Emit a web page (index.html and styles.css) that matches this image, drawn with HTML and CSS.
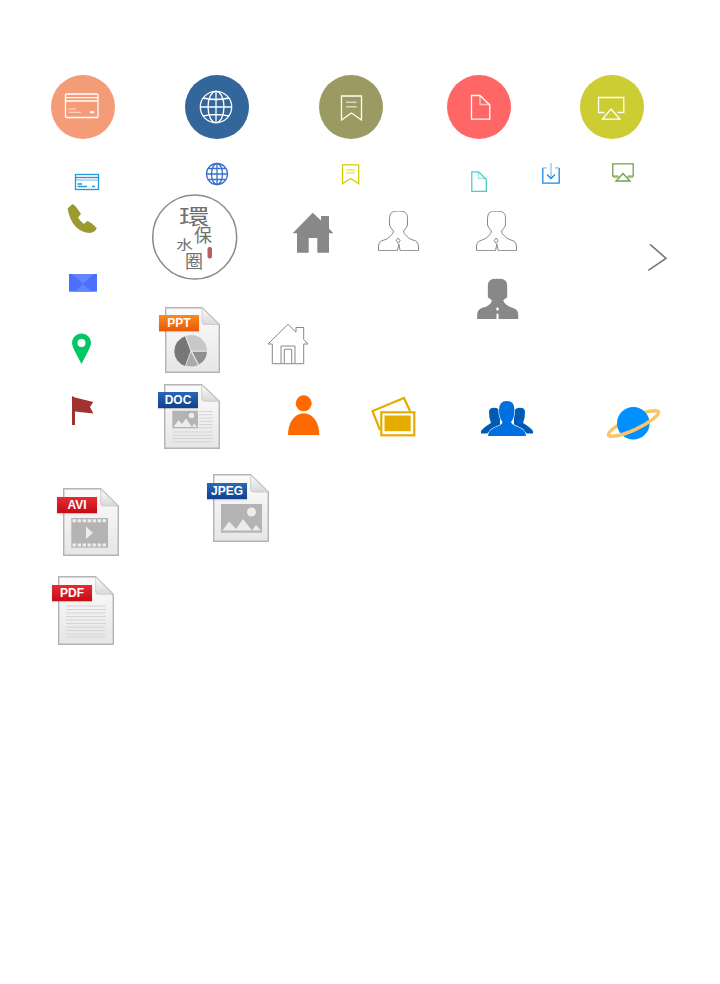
FILE: index.html
```html
<!DOCTYPE html>
<html lang="zh">
<head>
<meta charset="utf-8">
<title>Icons</title>
<link rel="stylesheet" href="styles.css">
</head>
<body>
<svg class="defs" width="0" height="0" aria-hidden="true">
  <defs>
    <linearGradient id="paper" x1="0" y1="0" x2="0" y2="1"><stop offset="0" stop-color="#fcfcfc"/><stop offset="1" stop-color="#e6e6e6"/></linearGradient>
    <linearGradient id="foldshade" x1="0" y1="0" x2="0" y2="1"><stop offset="0" stop-color="#fafafa"/><stop offset="1" stop-color="#d8d8d8"/></linearGradient>
    <symbol id="sheet" viewBox="0 0 55 66" preserveAspectRatio="none">
      <path class="paper" d="M.7.7H37L54.3 17.5V65.300H.7Z"/>
      <path class="fold" d="M37 1V15Q37 17.500 39.500 17.500H54Z"/>
    </symbol>
    <symbol id="bust" viewBox="0 0 122 120">
      <path d="M46 1Q60-1 74 1Q88 5 88 20V42Q86 50 76 60Q77 68 84 74Q92 84 104 87Q120 90 121 105V119H66L62 99 58 119H1V105Q2 90 18 87Q30 84 38 74Q45 68 46 60Q36 50 34 42V20Q34 5 46 1Z"/>
      <path d="M60 81L66 89 60 97 54 89Z"/>
    </symbol>
  </defs>
</svg>

<main class="canvas">
  <!-- large round badges -->
  <svg class="ic a1" viewBox="51 75 64 64">
    <circle class="f-peach" cx="83" cy="107" r="32"/>
    <g class="wline">
      <rect x="65.500" y="94" width="32.500" height="23.500" rx="1"/>
      <path d="M65.500 97.700H98M65.500 101H98"/>
      <path class="thin" d="M68.700 109H76M68.700 112.300H81"/>
      <path class="thick" d="M90 112.200H94.300"/>
    </g>
  </svg>
  <svg class="ic a2" viewBox="185 75 64 64">
    <circle class="f-navy" cx="217" cy="107" r="32"/>
    <g class="wline">
      <circle cx="216" cy="107" r="15.700"/>
      <ellipse cx="216" cy="107" rx="8" ry="15.700"/>
      <path d="M216 91.300V122.700M200.300 107H231.700M203 98Q216 101 229 98M203 116Q216 113 229 116"/>
    </g>
  </svg>
  <svg class="ic a3" viewBox="319 75 64 64">
    <circle class="f-olive" cx="351" cy="107" r="32"/>
    <g class="wline">
      <path d="M341.500 96H361.500V120L351.500 113 341.500 120Z"/>
      <path class="dim" d="M346 102.300H356.700M346 106.700H356.700"/>
    </g>
  </svg>
  <svg class="ic a4" viewBox="447 75 64 64">
    <circle class="f-coral" cx="479" cy="107" r="32"/>
    <g class="wline">
      <path d="M471.500 95.500H480L489.800 105V119.200H471.500Z"/>
      <path class="dim" d="M480 95.500V104.500H489.800"/>
    </g>
  </svg>
  <svg class="ic a5" viewBox="580 75 64 64">
    <circle class="f-lime" cx="612" cy="107" r="32"/>
    <g class="wline">
      <path d="M604.500 112.500H598.500V97.500H623.800V112.500H617.500"/>
      <path d="M611 109L620 119.200H602.500Z"/>
    </g>
  </svg>

  <!-- small line icons -->
  <svg class="ic b1" viewBox="74 173 26 18">
    <g class="line s-sky">
      <rect x="75.500" y="174.500" width="23" height="15"/>
      <path d="M75.500 177.500H98.500"/>
      <path class="soft" d="M75.500 180H98.500"/>
      <path d="M77.500 184H82M77.500 186.500H87M92 186.500H95"/>
    </g>
  </svg>
  <svg class="ic b2" viewBox="205 162 24 24">
    <g class="line s-indigo">
      <circle cx="217" cy="174" r="10.500"/>
      <ellipse cx="217" cy="174" rx="5.500" ry="10.500"/>
      <path d="M217 163.500V184.500M206.500 174H227.500M208.500 168.500H225.500M208.500 179.500H225.500"/>
    </g>
  </svg>
  <svg class="ic b3" viewBox="341 163 20 23">
    <g class="line s-yellow">
      <path d="M342.500 164.800H358.700V183.800L350.600 178.500 342.500 183.800Z"/>
      <path class="soft" d="M346 170H355M346 173H355"/>
    </g>
  </svg>
  <svg class="ic b4" viewBox="470 170 18 23">
    <g class="line s-cyan">
      <path d="M471.800 171.800H478.500L486.300 179.500V191.300H471.800Z"/>
      <path class="soft" d="M478.500 171.800V178.500H486.300"/>
    </g>
  </svg>
  <svg class="ic b5" viewBox="541 162 20 23">
    <path class="line s-azure" d="M542.800 168V183.200H559.200V168"/>
    <path class="line s-azure soft" d="M551 163V178M547 167.800H542.800M555 167.800H559.200"/>
    <path class="line s-azure" d="M547 174.500L551 178.500 555 174.500"/>
  </svg>
  <svg class="ic b6" viewBox="611 162 24 21">
    <g class="line s-moss">
      <path d="M618.500 176.200H612.800V163.800H633.200V176.200H627.500"/>
      <path class="soft" d="M613 177.500H620M626 177.500H633"/>
      <path d="M623 173.500L630 181H616Z"/>
    </g>
  </svg>

  <!-- contact glyphs -->
  <svg class="ic c1" viewBox="66 203 32 31">
    <path class="f-mustard" d="M67.500 208.500L72.500 204Q74.500 204 81 214L78 217.500Q80 221 84 224L87 221Q91 222 96.700 228Q96 231.500 90 233Q72 232 67.500 208.500Z"/>
  </svg>
  <svg class="ic c2" viewBox="68 273 30 20">
    <rect class="f-mail" x="69" y="274" width="28" height="17.700"/>
    <path class="f-mail-lt" d="M72 274H94L83 283.500Z"/>
    <path class="f-mail-lt" d="M74 291.700L83 284.500 92 291.700Z"/>
  </svg>
  <svg class="ic c3" viewBox="71 333 21 32">
    <path class="f-green" fill-rule="evenodd" d="M81.500 333.500C86.500 333.500 91 337.500 91 343C91 347 86 355 81.500 364C77 355 72 347 72 343C72 337.500 76.500 333.500 81.500 333.500ZM81.500 339A4 4 0 1 0 81.500 347A4 4 0 1 0 81.500 339Z"/>
  </svg>
  <svg class="ic c4" viewBox="71 395 24 31">
    <path class="f-flag" d="M72 396L75 397.500 93.300 402 90 407 93.300 413.500 75 411.500V425H72Z"/>
  </svg>

  <!-- seal -->
  <svg class="ic d1" viewBox="150 193 90 88">
    <circle class="seal-ring" cx="194.700" cy="237" r="42"/>
    <text class="seal-ch" transform="translate(179 223.500) scale(1.450 1)" font-size="21">環</text>
    <text class="seal-ch" x="194" y="241.800" font-size="18">保</text>
    <text class="seal-ch" transform="translate(176 249.400) scale(1.300 1)" font-size="13">水</text>
    <text class="seal-ch" x="185" y="267.800" font-size="18">圈</text>
    <rect class="f-stamp" x="207.500" y="247" width="4.500" height="11.500" rx="2"/>
  </svg>

  <!-- house and person glyphs -->
  <svg class="ic e1" viewBox="292 212 42 42">
    <path class="f-grey" fill-rule="evenodd" d="M312.700 212.700L321 220.500V216H329V228.500L333.300 233.300H329V252.800H297V233.300H292.700ZM308.700 238V252.800H317.300V238Z"/>
  </svg>
  <svg class="ic e2"><use href="#bust" class="bust-line"/></svg>
  <svg class="ic e3"><use href="#bust" class="bust-line"/></svg>
  <svg class="ic e4" viewBox="0 0 122 120">
    <path class="f-grey" d="M46 0Q60-2 76 0Q90 5 90 20V55Q84 60 78 64Q80 72 88 77Q96 84 106 86Q122 90 123 105V120H0V105Q2 90 16 86Q28 84 36 77Q44 72 44 64Q38 60 32 55V20Q32 5 46 0Z"/>
    <path class="f-white" d="M61 84L66 90 61 96 56 90ZM58 104H64V120H58Z"/>
  </svg>
  <svg class="ic e5" viewBox="646 242 22 30">
    <path class="chev" d="M650 244.300L666 258.300 648.300 270.300"/>
  </svg>
  <svg class="ic e6" viewBox="267 323 42 42">
    <path class="hair" d="M288 324.300L296 332.200V327.500H303.700V339.500L308 344H303.700V363.700H272.300V344H268ZM281 363.700V346H295V363.700M284.300 363.700V349.300H291.700V363.700"/>
  </svg>

  <!-- document icons -->
  <div class="doc doc-ppt">
    <svg class="sheet"><use href="#sheet"/></svg>
    <svg class="art" viewBox="165 307 55 66">
      <path class="p-light" d="M191.300 350.700L186 335.900A15.700 15.700 0 0 1 207 350.700Z"/>
      <path class="p-mid" d="M192.300 351.700H207A15.700 15.700 0 0 1 199 364.500Z"/>
      <path class="p-soft" d="M191 352L198 365A15.700 15.700 0 0 1 186 365.500Z"/>
      <path class="p-dark" d="M190.500 351L185 366A15.700 15.700 0 0 1 185 336.200Z"/>
    </svg>
    <span class="tag tag-orange">PPT</span>
  </div>
  <div class="doc doc-doc">
    <svg class="sheet"><use href="#sheet"/></svg>
    <svg class="art" viewBox="164 384 56 65">
      <rect class="p-pic" x="172.300" y="410.700" width="25.700" height="17.600"/>
      <circle class="p-paper" cx="191.500" cy="415.500" r="2.700"/>
      <path class="p-paper" d="M173.500 427L178.500 420 182 424 186 418.500 192 427 194 423.500 197 427Z"/>
      <path class="rules" d="M199 411.500H212.500M199 414.800H212.500M199 418H212.500M199 421.300H212.500M199 424.500H212.500M199 427.800H212.500M172.500 432H212.500M172.500 435.300H212.500M172.500 438.500H212.500M172.500 441.800H212.500"/>
    </svg>
    <span class="tag tag-blue">DOC</span>
  </div>
  <div class="doc doc-jpeg">
    <svg class="sheet"><use href="#sheet"/></svg>
    <svg class="art" viewBox="213 474 56 68">
      <rect class="p-pic" x="221" y="504" width="41" height="28.700"/>
      <circle class="p-paper" cx="251.500" cy="512" r="4.500"/>
      <path class="p-paper" d="M222.500 530.500L229 521.500 236 529 243 519 252 530.500 256 525 261 530.500Z"/>
    </svg>
    <span class="tag tag-blue">JPEG</span>
  </div>
  <div class="doc doc-avi">
    <svg class="sheet"><use href="#sheet"/></svg>
    <svg class="art" viewBox="63 488 56 68">
      <rect class="p-pic" x="71.300" y="518" width="36.700" height="29.700"/>
      <path class="film" d="M72.500 520.700H106.700M72.500 545H106.700"/>
      <path class="p-paper" d="M86 526.500L93 533 86 539Z"/>
    </svg>
    <span class="tag tag-red">AVI</span>
  </div>
  <div class="doc doc-pdf">
    <svg class="sheet"><use href="#sheet"/></svg>
    <svg class="art" viewBox="58 576 56 69">
      <path class="rules" d="M66 606H105.700M66 609.500H105.700M66 613H105.700M66 616.500H105.700M66 620H105.700M66 623.500H105.700M66 627H105.700M66 630.500H105.700M66 634H105.700M66 637H105.700"/>
    </svg>
    <span class="tag tag-red">PDF</span>
  </div>

  <!-- coloured glyphs, third row -->
  <svg class="ic g1" viewBox="287 394 34 42">
    <circle class="f-orange" cx="303.700" cy="403.300" r="8"/>
    <path class="f-orange" d="M288 435C288 422 295 413.300 303.700 413.300C312.500 413.300 319.300 422 319.300 435Z"/>
  </svg>
  <svg class="ic g2" viewBox="371 396 45 41">
    <path class="gold-line" d="M380 430L372.500 411 404 398 410 411"/>
    <rect class="gold-line" x="381.300" y="412.300" width="33" height="23"/>
    <rect class="f-gold" x="384.500" y="415.500" width="26.200" height="15.700"/>
  </svg>
  <svg class="ic g3" viewBox="480 400 54 37">
    <g class="f-team-back">
      <path id="teamBack" d="M494 407.700Q499 407.700 500 412V425L487 433.500H481V431Q484 427 491 423Q489 418 489 412Q489 407.700 494 407.700Z"/>
      <use href="#teamBack" transform="translate(1014 0) scale(-1 1)"/>
    </g>
    <path class="f-team" d="M506.700 401Q514.500 401 514.500 410Q514.500 418 511 422Q512 425 518 427Q526 430 526 436H488Q488 430 496 427Q502 425 502.500 422Q499 418 499 410Q499 401 506.700 401Z"/>
  </svg>
  <svg class="ic g4" viewBox="605 405 58 36">
    <path class="ring" d="M608.600 435.100A27.500 6.500 -25 0 1 658.400 411.900"/>
    <circle class="f-planet" cx="633.300" cy="423.300" r="16.300"/>
    <path class="ring" d="M608.600 435.100A27.500 6.500 -25 0 0 658.400 411.900"/>
  </svg>
</main>
</body>
</html>
```

FILE: styles.css
```css
html, body { margin: 0; padding: 0; background: #fff; }
.defs { position: absolute; }
.canvas { position: relative; width: 720px; height: 984px; overflow: hidden; background: #fff; font-family: "Liberation Sans", Arial, sans-serif; }
.ic { position: absolute; display: block; overflow: visible; }

/* placement on the sprite canvas */
.a1 { left: 51px; top: 75px; width: 64px; height: 64px; }
.a2 { left: 185px; top: 75px; width: 64px; height: 64px; }
.a3 { left: 319px; top: 75px; width: 64px; height: 64px; }
.a4 { left: 447px; top: 75px; width: 64px; height: 64px; }
.a5 { left: 580px; top: 75px; width: 64px; height: 64px; }
.b1 { left: 74px; top: 173px; width: 26px; height: 18px; }
.b2 { left: 205px; top: 162px; width: 24px; height: 24px; }
.b3 { left: 341px; top: 163px; width: 20px; height: 23px; }
.b4 { left: 470px; top: 170px; width: 18px; height: 23px; }
.b5 { left: 541px; top: 162px; width: 20px; height: 23px; }
.b6 { left: 611px; top: 162px; width: 24px; height: 21px; }
.c1 { left: 66px; top: 203px; width: 32px; height: 31px; }
.c2 { left: 68px; top: 273px; width: 30px; height: 20px; }
.c3 { left: 71px; top: 333px; width: 21px; height: 32px; }
.c4 { left: 71px; top: 395px; width: 24px; height: 31px; }
.d1 { left: 150px; top: 193px; width: 90px; height: 88px; }
.e1 { left: 292px; top: 212px; width: 42px; height: 42px; }
.e2 { left: 378px; top: 211px; width: 41px; height: 40px; }
.e3 { left: 476px; top: 211px; width: 41px; height: 40px; }
.e4 { left: 477px; top: 279px; width: 41px; height: 40px; }
.e5 { left: 646px; top: 242px; width: 22px; height: 30px; }
.e6 { left: 267px; top: 323px; width: 42px; height: 42px; }
.g1 { left: 287px; top: 394px; width: 34px; height: 42px; }
.g2 { left: 371px; top: 396px; width: 45px; height: 41px; }
.g3 { left: 480px; top: 400px; width: 54px; height: 37px; }
.g4 { left: 605px; top: 405px; width: 58px; height: 36px; }

/* fills */
.f-peach { fill: #f49c78; }
.f-navy { fill: #33669a; }
.f-olive { fill: #9b9a62; }
.f-coral { fill: #ff6666; }
.f-lime { fill: #cccc33; }
.f-mustard { fill: #9b9a30; }
.f-mail { fill: #4d6fff; }
.f-mail-lt { fill: #6585ff; }
.f-green { fill: #00c864; }
.f-flag { fill: #a13232; }
.f-stamp { fill: #b9605c; }
.f-grey { fill: #888; }
.f-white { fill: #fff; }
.f-orange { fill: #ff6a00; }
.f-gold { fill: #e5ac00; }
.f-team { fill: #0070e0; stroke: #fff; stroke-width: 1.2px; paint-order: stroke; }
.f-team-back { fill: #005bb5; }
.f-planet { fill: #0090ff; }

/* strokes */
.wline { fill: none; stroke: #fff; stroke-width: 1.300px; }
.wline .thin { stroke-width: 1px; opacity: .7; }
.wline .thick { stroke-width: 2px; }
.wline .dim { opacity: .6; stroke-width: 1.400px; }
.line { fill: none; stroke-width: 1.300px; }
.line .soft, .line.soft { stroke-width: 1.300px; opacity: .5; }
.s-sky { stroke: #1e9bd7; }
.s-indigo { stroke: #3b6fd0; }
.s-yellow { stroke: #d4d000; }
.s-cyan { stroke: #45cfd0; }
.s-azure { stroke: #1e88e5; }
.s-moss { stroke: #6fa04a; }
.bust-line { fill: none; stroke: #888; stroke-width: 3px; }
.hair { fill: #fff; stroke: #888; stroke-width: 1px; }
.chev { fill: none; stroke: #777; stroke-width: 1.600px; }
.gold-line { fill: none; stroke: #e5ac00; stroke-width: 2.200px; }
.ring { fill: none; stroke: #fbc566; stroke-width: 3.500px; stroke-linecap: round; }

/* seal */
.seal-ring { fill: none; stroke: #8a8a8a; stroke-width: 1.500px; }
.seal-ch { fill: #707070; font-family: "Noto Sans CJK TC", "Noto Sans CJK SC", sans-serif; }

/* document icons */
.doc { position: absolute; }
.doc .sheet, .doc .art { position: absolute; display: block; }
.doc-ppt { left: 165px; top: 307px; width: 55px; height: 66px; }
.doc-doc { left: 164px; top: 384px; width: 56px; height: 65px; }
.doc-jpeg { left: 213px; top: 474px; width: 56px; height: 68px; }
.doc-avi { left: 63px; top: 488px; width: 56px; height: 68px; }
.doc-pdf { left: 58px; top: 576px; width: 56px; height: 69px; }
.sheet, .art { left: 0; top: 0; width: 100%; height: 100%; }
.paper { fill: url(#paper); stroke: #b4b4b4; stroke-width: 1.400px; }
.fold { fill: url(#foldshade); stroke: #c8c8c8; stroke-width: .8px; }
.tag { position: absolute; height: 16px; width: 40px; color: #fff; font-weight: 700; font-size: 12px; line-height: 16px; text-align: center; box-shadow: 0 1px 1px rgba(0,0,0,.2); }
.tag-orange { background: linear-gradient(#fb8a20, #e85a08); }
.tag-blue { background: linear-gradient(#2a68b8, #12408c); }
.tag-red { background: linear-gradient(#ea2a30, #c40c16); }
.doc-ppt .tag { left: -6px; top: 8px; }
.doc-doc .tag { left: -6px; top: 8px; }
.doc-jpeg .tag { left: -6px; top: 9px; }
.doc-avi .tag { left: -6px; top: 9px; }
.doc-pdf .tag { left: -6px; top: 9px; }
.p-light { fill: #c8c8c8; }
.p-mid { fill: #8f8f8f; }
.p-soft { fill: #aaa; }
.p-dark { fill: #777; }
.p-pic { fill: #b4b4b4; }
.p-paper { fill: #ececec; }
.rules { fill: none; stroke: #d4d4d4; stroke-width: 1px; }
.film { fill: none; stroke: #ececec; stroke-width: 3px; stroke-dasharray: 3.500 1.500; }
```
